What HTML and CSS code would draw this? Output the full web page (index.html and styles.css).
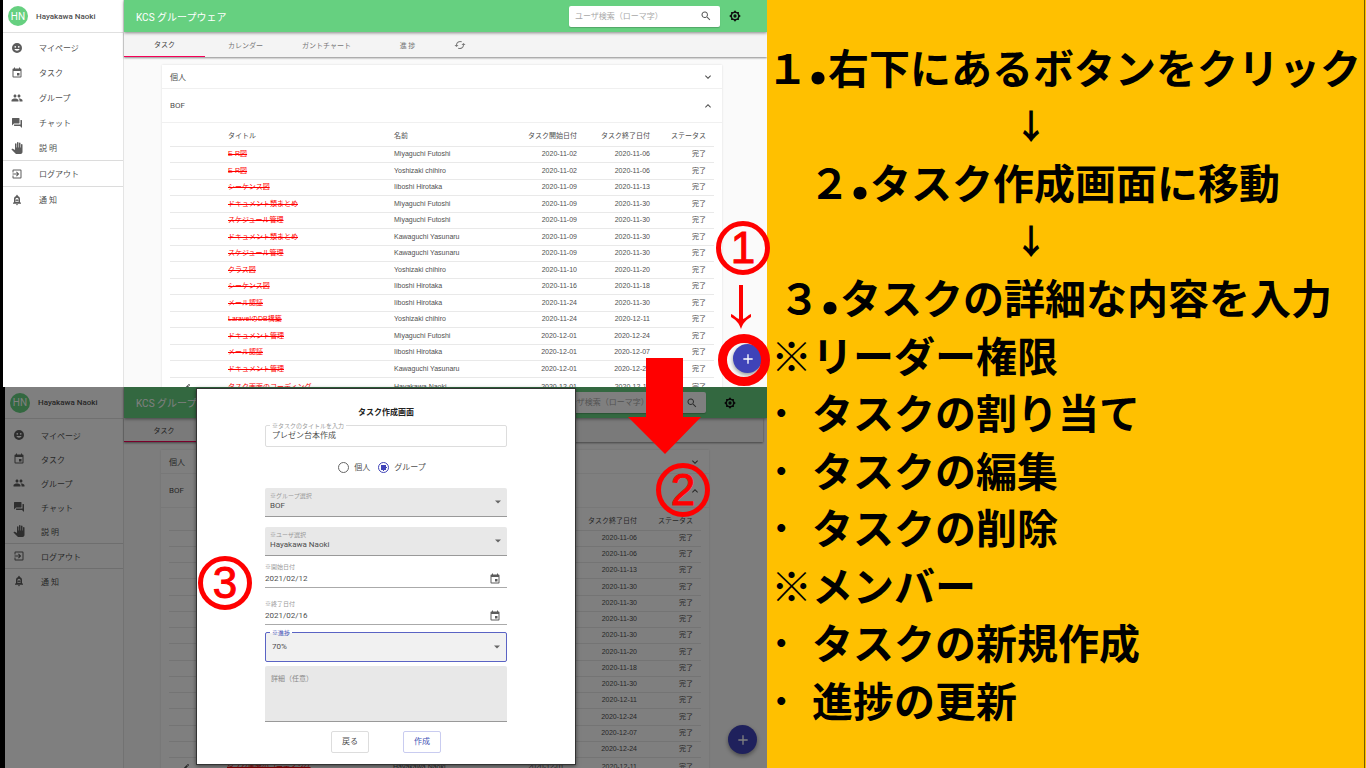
FILE: index.html
```html
<!DOCTYPE html>
<html lang="ja">
<head>
<meta charset="utf-8">
<title>KCS グループウェア タスク作成手順</title>
<link rel="stylesheet" href="styles.css">
</head>
<body>
<svg class="sprite" aria-hidden="true">
  <symbol id="face" viewBox="0 0 24 24"><path fill-rule="evenodd" d="M12 2a10 10 0 1 0 0 20 10 10 0 0 0 0-20zM8.500 8a1.700 1.700 0 1 1 0 3.400 1.700 1.700 0 0 1 0-3.400zm7 0a1.700 1.700 0 1 1 0 3.400 1.700 1.700 0 0 1 0-3.400zM6.500 14h11a6 6 0 0 1-11 0z"/></symbol>
  <symbol id="event" viewBox="0 0 24 24"><path d="M17 12h-5v5h5v-5zM16 1v2H8V1H6v2H5c-1.110 0-1.990.9-1.990 2L3 19a2 2 0 0 0 2 2h14c1.100 0 2-.9 2-2V5c0-1.100-.9-2-2-2h-1V1h-2zm3 18H5V8h14v11z"/></symbol>
  <symbol id="people" viewBox="0 0 24 24"><path d="M16 11c1.660 0 2.990-1.340 2.990-3S17.660 5 16 5s-3 1.340-3 3 1.340 3 3 3zm-8 0c1.660 0 2.990-1.340 2.990-3S9.660 5 8 5 5 6.340 5 8s1.340 3 3 3zm0 2c-2.330 0-7 1.170-7 3.500V19h14v-2.500C15 14.170 10.330 13 8 13zm8 0c-.3 0-.6 0-1 .05 1.200.8 2 2 2 3.450V19h6v-2.500c0-2.330-4.670-3.500-7-3.500z"/></symbol>
  <symbol id="chat" viewBox="0 0 24 24"><path d="M21 6h-2v9H6v2c0 .55.45 1 1 1h11l4 4V7c0-.55-.45-1-1-1zm-4 6V3c0-.55-.45-1-1-1H3c-.55 0-1 .45-1 1v14l4-4h10c.55 0 1-.45 1-1z"/></symbol>
  <symbol id="hand" viewBox="0 0 24 24"><path d="M23 5.500V20c0 2.200-1.800 4-4 4h-7.300c-1.080 0-2.100-.43-2.850-1.190L1 14.830s1.260-1.230 1.300-1.250c.44-.34.9-.3 1.400-.05L8 16V4a1.500 1.500 0 0 1 3 0v7h1V1.500a1.500 1.500 0 0 1 3 0V11h1V2.500a1.500 1.500 0 0 1 3 0V11h1V5.500a1.500 1.500 0 0 1 3 0z"/></symbol>
  <symbol id="exit" viewBox="0 0 24 24"><path d="M10.100 15.600 11.500 17l5-5-5-5-1.400 1.400 2.600 2.600H3v2h9.700l-2.600 2.600zM19 3H5a2 2 0 0 0-2 2v4h2V5h14v14H5v-4H3v4c0 1.100.9 2 2 2h14a2 2 0 0 0 2-2V5a2 2 0 0 0-2-2z"/></symbol>
  <symbol id="bell" viewBox="0 0 24 24"><path fill-rule="evenodd" d="M12 1.500c-.9 0-1.500.7-1.500 1.500v.8C7.600 4.500 6 7 6 10v6l-2 2v1.500h16V18l-2-2v-6c0-3-1.600-5.500-4.500-6.200V3c0-.8-.6-1.500-1.500-1.500zM12 7.500c2 0 3 1.500 3 3.500v5H9v-5c0-2 1-3.500 3-3.500zM11 10v2H9.500v1.500H11V15h2v-1.500h1.500V12H13v-2zM10 20.500h4a2 2 0 0 1-4 0z"/></symbol>
  <symbol id="search" viewBox="0 0 24 24"><path d="M15.500 14h-.8l-.3-.3a6.500 6.500 0 1 0-.7.7l.3.3v.8l5 5 1.500-1.500-5-5zm-6 0a4.500 4.500 0 1 1 0-9 4.500 4.500 0 0 1 0 9z"/></symbol>
  <symbol id="gear" viewBox="0 0 24 24"><path fill-rule="evenodd" d="m12 .5 3.200 3.400 4.600-.1.100 4.700L23.500 12l-3.600 3.500-.1 4.700-4.600-.1L12 23.500l-3.200-3.400-4.600.1-.1-4.700L.5 12l3.600-3.500.1-4.700 4.600.1zM12 6a6 6 0 1 0 0 12 6 6 0 0 0 0-12zm0 2.700a3.300 3.300 0 1 1 0 6.600 3.300 3.300 0 0 1 0-6.600z"/></symbol>
  <symbol id="sync" viewBox="0 0 24 24"><path d="m19 8-4 4h3a6 6 0 0 1-8.800 5.300l-1.460 1.460A8 8 0 0 0 20 12h3l-4-4zM6 12a6 6 0 0 1 8.800-5.300l1.460-1.460A8 8 0 0 0 4 12H1l4 4 4-4H6z"/></symbol>
  <symbol id="down" viewBox="0 0 24 24"><path d="M16.600 8.600 12 13.200 7.400 8.600 6 10l6 6 6-6z"/></symbol>
  <symbol id="up" viewBox="0 0 24 24"><path d="m12 8-6 6 1.400 1.400 4.600-4.600 4.600 4.600L18 14z"/></symbol>
  <symbol id="plus" viewBox="0 0 24 24"><path d="M19 13h-6v6h-2v-6H5v-2h6V5h2v6h6z"/></symbol>
  <symbol id="edit" viewBox="0 0 24 24"><path d="M3 17.200V21h3.800L17.800 9.900l-3.700-3.700L3 17.200zM20.700 7a1 1 0 0 0 0-1.400l-2.300-2.300a1 1 0 0 0-1.400 0l-1.800 1.800 3.700 3.700L20.700 7z"/></symbol>
  <symbol id="caret" viewBox="0 0 24 24"><path d="m6 9 6 6 6-6z"/></symbol>
</svg>

<main class="slide">
  <section class="shots">
    <div class="shot shot-list"></div>
    <div class="shot shot-dialog"></div>

    <form class="dialog" role="dialog" aria-labelledby="dialog-title">
      <h2 class="dialog-title" id="dialog-title">タスク作成画面</h2>
      <div class="outlined title-field">
        <label class="legend" for="task-title">※タスクのタイトルを入力</label>
        <input class="control" id="task-title" type="text" value="プレゼン台本作成">
      </div>
      <div class="radios">
        <label class="radio"><input type="radio" name="kind">個人</label>
        <label class="radio"><input type="radio" name="kind" checked>グループ</label>
      </div>
      <div class="filled">
        <label class="caption" for="group">※グループ選択</label>
        <select class="control" id="group"><option>BOF</option></select>
        <svg class="caret"><use href="#caret"/></svg>
      </div>
      <div class="filled">
        <label class="caption" for="user">※ユーザ選択</label>
        <select class="control" id="user"><option>Hayakawa Naoki</option></select>
        <svg class="caret"><use href="#caret"/></svg>
      </div>
      <div class="date">
        <label class="caption" for="start">※開始日付</label>
        <div class="date-row"><input class="control" id="start" type="text" value="2021/02/12"><button type="button" class="icon-button" aria-label="開始日付を選択"><svg class="icon"><use href="#event"/></svg></button></div>
      </div>
      <div class="date">
        <label class="caption" for="end">※終了日付</label>
        <div class="date-row"><input class="control" id="end" type="text" value="2021/02/16"><button type="button" class="icon-button" aria-label="終了日付を選択"><svg class="icon"><use href="#event"/></svg></button></div>
      </div>
      <div class="outlined progress-field">
        <label class="legend" for="progress">※進捗</label>
        <select class="control" id="progress"><option>70%</option></select>
        <svg class="caret"><use href="#caret"/></svg>
      </div>
      <textarea class="detail" aria-label="詳細（任意）" placeholder="詳細（任意）"></textarea>
      <div class="actions">
        <button type="button" class="action">戻る</button>
        <button type="button" class="action primary">作成</button>
      </div>
    </form>

    <span class="step step-one">1</span>
    <span class="step step-two">2</span>
    <span class="step step-three">3</span>
    <svg class="thin-arrow" viewBox="0 0 22 44"><path d="M9 0h4v34c3-1 5-4 8-5v3c-5 3-8 6-10 12-2-6-5-9-10-12v-3c3 1 5 4 8 5z"/></svg>
    <span class="ring"></span>
    <svg class="block-arrow" viewBox="0 0 74 96"><path d="M18 0h37v59h18L37 96 0 59h18z"/></svg>
  </section>

  <section class="notes">
    <p class="note note-one">１<span class="dot">.</span>右下にあるボタンをクリック</p>
    <p class="note note-arrow">↓</p>
    <p class="note note-two">２<span class="dot">.</span>タスク作成画面に移動</p>
    <p class="note note-arrow">↓</p>
    <p class="note note-three">３<span class="dot">.</span>タスクの詳細な内容を入力</p>
    <p class="note">※リーダー権限</p>
    <p class="note"><span class="bullet">･</span>タスクの割り当て</p>
    <p class="note"><span class="bullet">･</span>タスクの編集</p>
    <p class="note"><span class="bullet">･</span>タスクの削除</p>
    <p class="note">※メンバー</p>
    <p class="note"><span class="bullet">･</span>タスクの新規作成</p>
    <p class="note"><span class="bullet">･</span>進捗の更新</p>
  </section>
</main>
<script src="app.js"></script>
</body>
</html>
```

FILE: styles.css
```css
* { box-sizing: border-box; }

body {
  margin: 0;
  background: #ffc000;
  font-family: Roboto, "Noto Sans CJK JP", sans-serif;
  color: #4f4f4f;
}

button, input, select, textarea {
  margin: 0;
  padding: 0;
  border: 0;
  background: none;
  font: inherit;
  color: inherit;
  appearance: none;
  outline: none;
}

p, h1, h2 { margin: 0; }
.sprite { position: absolute; width: 0; height: 0; }
.icon { display: block; width: 12px; height: 12px; fill: currentColor; flex: none; }

.slide {
  display: grid;
  grid-template-columns: 767fr 599fr;
  height: 100vh;
  min-height: 768px;
  overflow: hidden;
}

.shots {
  position: relative;
  display: grid;
  grid-template-rows: 387fr 381fr;
  min-width: 0;
  min-height: 0;
  background: #000;
}

/* Groupware window */
.shot {
  position: relative;
  isolation: isolate;
  display: grid;
  grid-template-columns: 121px 1fr;
  min-height: 0;
  overflow: hidden;
  background: #fafafa;
  --bar: 32px;
  --tabs: 25px;
  --tab: 81px;
  --item: 25px;
  --nav-top: 2px;
}
.shot-list { margin-left: 3px; }
.shot-dialog {
  margin-left: 5px;
  grid-template-columns: 119px 1fr;
  --bar: 31px;
  --tabs: 24px;
  --tab: 80px;
  --item: 24px;
  --nav-top: 4px;
}
.shot-dialog::after {
  content: "";
  position: absolute;
  inset: 0;
  background: rgba(0, 0, 0, .5);
  z-index: 2;
}

.sidebar { background: #fff; border-right: 1px solid #e4e4e4; }
.profile {
  display: flex;
  align-items: center;
  gap: 8px;
  height: calc(var(--bar) + 1px);
  padding-left: 5px;
  border-bottom: 1px solid #e0e0e0;
  font-size: 8px;
  font-weight: 500;
}
.avatar {
  display: grid;
  place-items: center;
  width: 20px;
  height: 20px;
  border-radius: 50%;
  background: #66d080;
  color: #fff;
  font-size: 10px;
  font-weight: 400;
}
.nav-group { padding: var(--nav-top) 0 0; }
.nav-group + .nav-group { padding: 0; border-top: 1px solid #dcdcdc; }
.nav-link {
  display: flex;
  align-items: center;
  gap: 16px;
  height: var(--item);
  padding-left: 8px;
  font-size: 8px;
  text-decoration: none;
  color: inherit;
}
.nav-link .icon { color: #5c5c5c; }

.workspace { min-width: 0; }
.appbar {
  position: relative;
  display: flex;
  align-items: center;
  height: var(--bar);
  padding: 0 26px 0 12px;
  background: #66d080;
  box-shadow: 0 1px 3px rgba(0, 0, 0, .45);
  z-index: 1;
}
.shot-dialog .appbar { padding-right: 31px; }
.brand { flex: 1; color: #fff; font-size: 10px; font-weight: 400; }
.searchbox {
  display: flex;
  align-items: center;
  width: 151px;
  height: 21px;
  padding: 0 8px 0 6px;
  border-radius: 2px;
  background: #fff;
  box-shadow: 0 1px 1px rgba(0, 0, 0, .2);
}
.search-input { flex: 1; min-width: 0; font-size: 8px; }
.search-input::placeholder { color: #a8a8a8; }
.icon-button { color: #5c5c5c; }
.settings { margin-left: 9px; color: #111; }
.shot-dialog .settings { margin-left: 18px; }

.tabs {
  display: flex;
  height: var(--tabs);
  background: #f4f4f4;
  box-shadow: 0 1px 2px rgba(0, 0, 0, .45);
}
.shot-dialog .tabs { margin-right: 4px; }
.tab {
  display: grid;
  place-items: center;
  width: var(--tab);
  color: #777;
  font-size: 7px;
}
.tab.active { color: #444; border-bottom: 1px solid #f50057; }
.tab.refresh { width: 24px; }

.board {
  margin: 8px 45px 0 38px;
  background: #fff;
  box-shadow: 0 0 2px rgba(0, 0, 0, .12);
}
.shot-dialog .board { margin: 8px 58px 0 37px; }
.panel-head {
  display: flex;
  align-items: center;
  justify-content: space-between;
  width: 100%;
  height: 24px;
  padding: 0 8px;
  border-bottom: 1px solid #f0f0f0;
  font-size: 8px;
}
.panel-head.open { height: 34px; }

.table-wrap { padding: 4px 8px 0; }
.tasks {
  width: 100%;
  border-collapse: collapse;
  table-layout: fixed;
  font-family: "Liberation Sans", "Noto Sans CJK JP", sans-serif;
  font-size: 7px;
  line-height: 10px;
}
.tasks th, .tasks td {
  height: 16px;
  padding: 0 8px;
  border-bottom: 1px solid #e9e9e9;
  font-weight: 400;
  text-align: left;
  white-space: nowrap;
}
.tasks th { height: 19px; }
.shot-dialog .tasks th { height: 18px; }
.shot-list .tasks tbody tr:nth-child(even) td,
.shot-dialog .tasks tbody tr:nth-child(4n) td { height: 17px; }
.tasks tbody tr.editable td { height: 20px; }
.tasks .num { text-align: right; }
.tasks .title { color: #f00; text-decoration: line-through; }
.tasks .icon { width: 8px; height: 8px; margin-left: 5px; }
.col-action { width: 50px; }
.col-title { width: 166px; }
.col-date { width: 73px; }
.col-status { width: 56px; }

.fab {
  position: absolute;
  right: 5px;
  bottom: 14px;
  display: grid;
  place-items: center;
  width: 29px;
  height: 29px;
  border-radius: 50%;
  background: #3f43b8;
  color: #fff;
  box-shadow: 0 2px 4px rgba(0, 0, 0, .4);
}
.fab .icon { width: 16px; height: 16px; }
.shot-dialog .fab { right: 10px; }

/* Task creation dialog */
.dialog {
  position: absolute;
  left: 196px;
  top: 388px;
  width: 380px;
  padding: 18px 68px 11px;
  background: #fff;
  border: 1px solid #333;
  box-shadow: 0 1px 4px rgba(0, 0, 0, .5);
  font-size: 8px;
  line-height: 10px;
}
.dialog-title { color: #222; font-size: 8px; line-height: 11px; text-align: center; }
.caption, .legend { display: block; color: #999; font-size: 6px; line-height: 8px; }
.dialog .control { display: block; width: 100%; height: 12px; font-size: 8px; line-height: 12px; }
.outlined { position: relative; border: 1px solid #ddd; border-radius: 2px; }
.legend { position: absolute; left: 4px; top: -4px; padding: 0 2px; background: #fff; }
.title-field { height: 22px; margin-top: 7px; padding: 4px 6px; }
.radios { display: flex; justify-content: center; gap: 8px; margin: 15px 8px 15px 0; }
.radio { display: flex; align-items: center; gap: 5px; }
.radio input {
  width: 11px;
  height: 11px;
  border: 1px solid #666;
  border-radius: 50%;
}
.radio input:checked {
  border-color: #3f43b8;
  background: radial-gradient(circle, #3f43b8 3px, transparent 3px);
}
.filled {
  position: relative;
  height: 29px;
  margin-bottom: 10px;
  padding: 4px 5px;
  background: #e8e8e8;
  border-bottom: 1px solid #999;
  border-radius: 2px 2px 0 0;
}
.caret {
  position: absolute;
  right: 3px;
  top: 8px;
  width: 12px;
  height: 12px;
  fill: #666;
  pointer-events: none;
}
.date { height: 25px; margin-bottom: 12px; border-bottom: 1px solid #aaa; }
.filled + .date { margin-top: -3px; }
.date-row { display: flex; align-items: center; height: 15px; padding-right: 6px; }
.progress-field {
  height: 30px;
  margin-top: -5px;
  padding: 8px 6px;
  background: #f1f1f1;
  border-color: #5a63c4;
}
.progress-field .legend { background: linear-gradient(#fff 4px, #f1f1f1 4px); color: #3f51b5; }
.detail {
  display: block;
  width: 100%;
  height: 56px;
  margin-top: 4px;
  padding: 8px 6px;
  background: #e8e8e8;
  border-bottom: 1px solid #999;
  border-radius: 2px 2px 0 0;
  resize: none;
}
.detail::placeholder { color: #888; font-size: 7px; }
.actions { display: flex; justify-content: center; gap: 34px; margin-top: 9px; }
.action {
  width: 38px;
  height: 22px;
  border: 1px solid #ddd;
  border-radius: 2px;
  font-size: 8px;
}
.action.primary { border-color: #c9ccf0; color: #3f51b5; }

/* Red annotations drawn over the windows */
.step, .ring, .thin-arrow, .block-arrow { position: absolute; }
.step {
  display: grid;
  place-items: center;
  width: 54px;
  height: 54px;
  border: 5px solid #f00;
  border-radius: 50%;
  color: #f00;
  font: 44px/44px "Liberation Sans", Arial, sans-serif;
  -webkit-text-stroke: 1px #f00;
}
.step-one { left: 716px; top: 221px; }
.step-two { left: 656px; top: 463px; }
.step-three { left: 198px; top: 556px; }
.ring {
  left: 718px;
  top: 334px;
  width: 52px;
  height: 52px;
  border: 9px solid #f00;
  border-radius: 50%;
}
.thin-arrow { left: 730px; top: 285px; width: 22px; height: 44px; fill: #f00; }
.block-arrow { left: 628px; top: 358px; width: 74px; height: 96px; fill: #f00; }

/* Explanation column */
.notes {
  display: flex;
  flex-direction: column;
  margin-right: 1px;
  padding: 38px 0 40px;
  border-right: 1px solid #7a5c00;
  color: #000;
  font-family: "Noto Sans CJK JP", sans-serif;
  font-size: 41px;
  font-weight: 700;
  line-height: 57px;
}
.note { flex: 1; padding-left: 4px; white-space: nowrap; }
.note-one { padding-left: 0; }
.note-two { padding-left: 42px; }
.note-three { padding-left: 12px; }
.note-arrow { padding-left: 247px; font-size: 34px; }
.dot {
  display: inline-block;
  width: 20px;
  font-family: Lato, sans-serif;
  font-size: 80px;
  font-weight: 900;
  line-height: 1px;
  text-align: center;
}
.bullet { display: inline-block; width: 41px; }
```

FILE: app.js
```js
const navGroups = [
  [['face', 'マイページ'], ['event', 'タスク'], ['people', 'グループ'], ['chat', 'チャット'], ['hand', '説 明']],
  [['exit', 'ログアウト']],
  [['bell', '通 知']],
];

const tasks = [
  ['E-R図', 'Miyaguchi Futoshi', '2020-11-02', '2020-11-06'],
  ['E-R図', 'Yoshizaki chihiro', '2020-11-02', '2020-11-06'],
  ['シーケンス図', 'Iiboshi Hirotaka', '2020-11-09', '2020-11-13'],
  ['ドキュメント類まとめ', 'Miyaguchi Futoshi', '2020-11-09', '2020-11-30'],
  ['スケジュール管理', 'Miyaguchi Futoshi', '2020-11-09', '2020-11-30'],
  ['ドキュメント類まとめ', 'Kawaguchi Yasunaru', '2020-11-09', '2020-11-30'],
  ['スケジュール管理', 'Kawaguchi Yasunaru', '2020-11-09', '2020-11-30'],
  ['クラス図', 'Yoshizaki chihiro', '2020-11-10', '2020-11-20'],
  ['シーケンス図', 'Iiboshi Hirotaka', '2020-11-16', '2020-11-18'],
  ['メール認証', 'Iiboshi Hirotaka', '2020-11-24', '2020-11-30'],
  ['LaravelのDB構築', 'Yoshizaki chihiro', '2020-11-24', '2020-12-11'],
  ['ドキュメント管理', 'Miyaguchi Futoshi', '2020-12-01', '2020-12-24'],
  ['メール認証', 'Iiboshi Hirotaka', '2020-12-01', '2020-12-07'],
  ['ドキュメント管理', 'Kawaguchi Yasunaru', '2020-12-01', '2020-12-24'],
  ['タスク画面のコーディング', 'Hayakawa Naoki', '2020-12-01', '2020-12-11', true],
];

const icon = (name) => `<svg class="icon" aria-hidden="true"><use href="#${name}"/></svg>`;

const navHtml = navGroups.map((group) =>
  `<div class="nav-group">${group.map(([name, text]) =>
    `<a class="nav-link" href="#">${icon(name)}<span>${text}</span></a>`).join('')}</div>`).join('');

const rowsHtml = tasks.map(([title, name, start, end, editable]) =>
  `<tr class="${editable ? 'editable' : ''}"><td>${editable ? icon('edit') : ''}</td><td class="title">${title}</td><td>${name}</td>
   <td class="num">${start}</td><td class="num">${end}</td><td class="num">完了</td></tr>`).join('');

document.querySelectorAll('.shot').forEach((shot) => {
  shot.innerHTML = `
    <aside class="sidebar">
      <header class="profile"><span class="avatar">HN</span><span>Hayakawa Naoki</span></header>
      <nav>${navHtml}</nav>
    </aside>
    <div class="workspace">
      <header class="appbar">
        <h1 class="brand">KCS グループウェア</h1>
        <div class="searchbox">
          <input class="search-input" type="text" aria-label="ユーザ検索" placeholder="ユーザ検索（ローマ字）">
          <button class="icon-button" aria-label="検索">${icon('search')}</button>
        </div>
        <button class="settings" aria-label="設定">${icon('gear')}</button>
      </header>
      <div class="tabs">
        <button class="tab active">タスク</button>
        <button class="tab">カレンダー</button>
        <button class="tab">ガントチャート</button>
        <button class="tab">進 捗</button>
        <button class="tab refresh" aria-label="更新">${icon('sync')}</button>
      </div>
      <div class="board">
        <button class="panel-head">個人${icon('down')}</button>
        <button class="panel-head open">BOF${icon('up')}</button>
        <div class="table-wrap">
          <table class="tasks">
            <colgroup><col class="col-action"><col class="col-title"><col><col class="col-date"><col class="col-date"><col class="col-status"></colgroup>
            <thead><tr><th></th><th>タイトル</th><th>名前</th><th class="num">タスク開始日付</th><th class="num">タスク終了日付</th><th class="num">ステータス</th></tr></thead>
            <tbody>${rowsHtml}</tbody>
          </table>
        </div>
      </div>
    </div>
    <button class="fab" aria-label="タスクを追加">${icon('plus')}</button>`;
});
```
